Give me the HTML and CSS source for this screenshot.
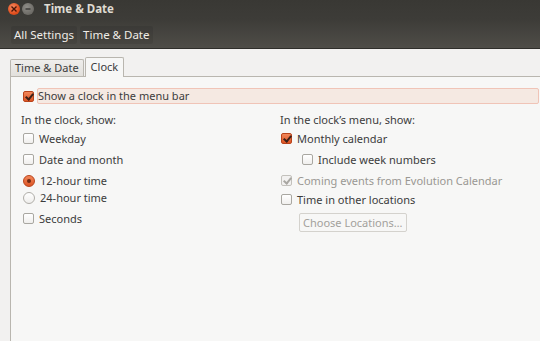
FILE: index.html
```html
<!DOCTYPE html>
<html lang="en">
<head>
    <meta charset="UTF-8">
    <title>Time &amp; Date</title>
    <link rel="stylesheet" href="styles.css">
</head>
<body>
    <div class="window">
        <div class="header">
            <div class="titlebar">
                <span class="win-btn close">
                    <svg width="8" height="8" viewBox="0 0 8 8"><path d="M1.5 1.5L6.5 6.5M6.5 1.5L1.5 6.5" stroke="#4a1508" stroke-width="1.4"/></svg>
                </span>
                <span class="win-btn minimize">
                    <svg width="8" height="8" viewBox="0 0 8 8"><path d="M1.5 4H6.5" stroke="#3a3935" stroke-width="1.4"/></svg>
                </span>
                <span class="title">Time &amp; Date</span>
            </div>
            <div class="toolbar">
                <span class="crumb">All Settings</span>
                <span class="crumb">Time &amp; Date</span>
            </div>
        </div>

        <div class="body">
            <div class="tabs">
                <span class="tab">Time &amp; Date</span>
                <span class="tab active">Clock</span>
            </div>
            <div class="page">
                <div class="menubar-row">
                    <span class="check on"></span>
                    <span class="highlight">Show a clock in the menu bar</span>
                </div>

                <div class="columns">
                    <div class="col left">
                        <div class="opt">In the clock, show:</div>
                        <div class="opt m2"><span class="check"></span>Weekday</div>
                        <div class="opt m4"><span class="check"></span>Date and month</div>
                        <div class="opt m4"><span class="radio on"></span>12-hour time</div>
                        <div class="opt"><span class="radio"></span>24-hour time</div>
                        <div class="opt m4"><span class="check"></span>Seconds</div>
                    </div>
                    <div class="col right">
                        <div class="opt">In the clock’s menu, show:</div>
                        <div class="opt m2"><span class="check on"></span>Monthly calendar</div>
                        <div class="opt m4 indent"><span class="check"></span>Include week numbers</div>
                        <div class="opt m4 disabled"><span class="check on-disabled"></span>Coming events from Evolution Calendar</div>
                        <div class="opt m2"><span class="check"></span>Time in other locations</div>
                        <button type="button" class="btn">Choose Locations…</button>
                    </div>
                </div>
            </div>
        </div>
    </div>
</body>
</html>
```

FILE: styles.css
```css
* {
    box-sizing: border-box;
    margin: 0;
    padding: 0;
}

body {
    font-family: 'Noto Sans', 'Open Sans', sans-serif;
    font-size: 11px;
    color: #3c3c3c;
    background-color: #f2f1f0;
    width: 540px;
    height: 341px;
    overflow: hidden;
}

.header {
    height: 49px;
    background: linear-gradient(#393834, #3d3c38 40%, #4f4d48);
    border-bottom: 1px solid #2f2e2b;
}

.titlebar {
    height: 17px;
    display: flex;
    align-items: center;
    padding-left: 8px;
}

.win-btn {
    width: 12px;
    height: 12px;
    border-radius: 50%;
    display: flex;
    align-items: center;
    justify-content: center;
    margin-right: 2px;
}

.close {
    background: radial-gradient(circle at 40% 35%, #f58a61, #e2501f 60%, #b93e12);
}

.minimize {
    background: radial-gradient(circle at 40% 35%, #8f8d88, #6c6a65 70%);
}

.title {
    margin-left: 8px;
    font-weight: bold;
    font-size: 11.5px;
    color: #dfdbd2;
}

.toolbar {
    display: flex;
    gap: 3px;
    padding: 9px 0 0 11px;
}

.crumb {
    color: #efece7;
    font-size: 11.5px;
    padding: 1px 3px 2px;
    background: rgba(0, 0, 0, 0.08);
    border-radius: 2px;
}

.body {
    padding: 8px 0 0 10px;
}

.tabs {
    display: flex;
    align-items: flex-end;
    height: 19px;
}

.tab {
    height: 17px;
    padding: 0 4px;
    line-height: 16px;
    border: 1px solid #b9b6af;
    border-bottom: none;
    border-radius: 2px 2px 0 0;
    background: linear-gradient(#efeeec, #e2e0dc);
    margin-right: 1px;
}

.tab.active {
    height: 20px;
    line-height: 18px;
    padding: 0 5px;
    background: #f7f7f6;
    margin-bottom: -1px;
    position: relative;
}

.page {
    height: 270px;
    background: #f7f7f6;
    border-left: 1px solid #b9b6af;
    border-top: 1px solid #b9b6af;
    padding: 11px 0 0 10px;
}

.menubar-row {
    display: flex;
    align-items: center;
    height: 16px;
    margin-left: 2px;
}

.menubar-row .check {
    margin-right: 3px;
}

.highlight {
    flex: 1;
    height: 16px;
    line-height: 14px;
    margin-right: 1px;
    padding-left: 0;
    background: #f5e9e2;
    border: 1px solid #f0c4b7;
    border-radius: 2px;
}

.columns {
    display: grid;
    grid-template-columns: 259px 1fr;
    margin-top: 7px;
}

.opt {
    height: 17px;
    display: flex;
    align-items: center;
    white-space: nowrap;
}

.m2 {
    margin-top: 2px;
}

.m4 {
    margin-top: 4px;
}

.indent {
    padding-left: 21px;
}

.disabled {
    color: #9a9893;
}

.left .check,
.left .radio {
    margin-left: 2px;
}

.right .check {
    margin-left: 1px;
}

.check {
    width: 11px;
    height: 11px;
    margin-right: 5px;
    border: 1px solid #a9a7a1;
    border-radius: 2px;
    background: linear-gradient(#ffffff, #f0efed);
    flex-shrink: 0;
    position: relative;
}

.check.on {
    border-color: #b9431b;
    background: linear-gradient(#f2875a, #dd5525);
}

.check.on::after,
.check.on-disabled::after {
    content: "";
    position: absolute;
    left: 3px;
    top: 0;
    width: 3px;
    height: 6px;
    border: solid #fff;
    border-width: 0 2px 2px 0;
    transform: rotate(40deg);
}

.check.on::after {
    border-color: #3d2118;
}

.check.on-disabled {
    border-color: #c3c1bc;
    background: #f2f1f0;
}

.check.on-disabled::after {
    border-color: #a9a7a2;
}

.radio {
    width: 12px;
    height: 12px;
    margin-right: 5px;
    border: 1px solid #b0aea8;
    border-radius: 50%;
    background: linear-gradient(#ffffff, #efeeec);
    flex-shrink: 0;
    position: relative;
}

.radio.on {
    border-color: #b9431b;
    background: linear-gradient(#f2875a, #dd5525);
}

.radio.on::after {
    content: "";
    position: absolute;
    left: 3px;
    top: 3px;
    width: 4px;
    height: 4px;
    border-radius: 50%;
    background: #6e2a12;
}

.btn {
    align-self: flex-start;
    margin: 5px 0 0 19px;
    height: 19px;
    padding: 0 3px;
    font-family: inherit;
    font-size: 11px;
    color: #a3a19c;
    background: #f7f7f6;
    border: 1px solid #d4d2cd;
    border-radius: 2px;
}

.right {
    display: flex;
    flex-direction: column;
}
```
